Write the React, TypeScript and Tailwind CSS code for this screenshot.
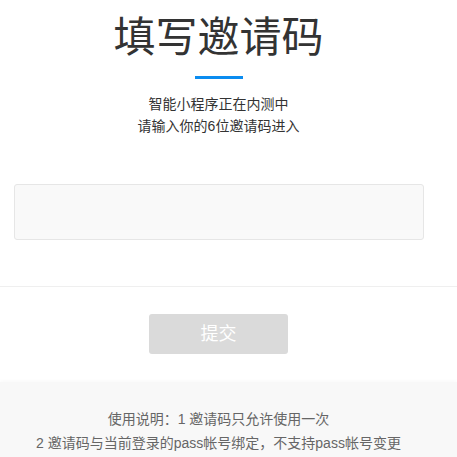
import React from 'react';

const font = { fontFamily: '"Liberation Sans", "Noto Sans CJK SC", sans-serif' };

export default function App() {
  return (
    <div className="min-h-[457px] bg-white" style={font}>
      {/* header */}
      <div className="w-[437px] flex flex-col items-center pt-[17px]">
        <h1 className="text-[42px] leading-[42px] text-[#333] font-normal">填写邀请码</h1>
        <div className="mt-[17px] w-[48px] h-[3px] bg-[#0b8cf0]" />
        <div className="mt-[14px] text-[14px] leading-[22px] text-[#333] text-center">
          <p>智能小程序正在内测中</p>
          <p>请输入你的6位邀请码进入</p>
        </div>
      </div>

      {/* input */}
      <div className="w-[437px] pt-[47px] pb-[46px]">
        <input
          type="text"
          className="ml-[14px] block w-[410px] h-[56px] rounded-[3px] border border-[#e6e6e6] bg-[#f9f9f9] px-3 text-[16px] outline-none"
        />
      </div>

      <div className="border-t border-[#efefef]" />

      {/* submit */}
      <div className="w-[437px] flex justify-center pt-[27px] pb-[28px]">
        <button
          type="button"
          className="w-[139px] h-[40px] rounded-[3px] bg-[#dadada] text-white text-[18px]"
        >
          提交
        </button>
      </div>

      {/* footer */}
      <div className="bg-[#f8f8f8] shadow-[0_-2px_3px_rgba(0,0,0,0.02)] pt-[25px] pb-[10px]">
        <div className="w-[437px] text-center text-[14px] leading-[24px] text-[#666]">
          <p>使用说明：1 邀请码只允许使用一次</p>
          <p>2 邀请码与当前登录的pass帐号绑定，不支持pass帐号变更</p>
        </div>
      </div>
    </div>
  );
}
